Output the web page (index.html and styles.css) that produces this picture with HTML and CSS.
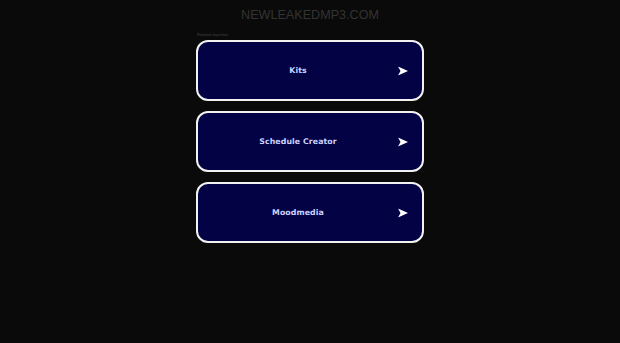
FILE: index.html
```html
<!DOCTYPE html>
<html>
<head>
<meta charset="utf-8">
<link rel="stylesheet" href="styles.css">
</head>
<body>
<div class="page">
  <div class="domain">NEWLEAKEDMP3.COM</div>
  <div class="main">
    <div class="related">Related searches</div>
    <div class="list">
      <a class="item"><span class="label">Kits</span><span class="arrow"><svg width="10" height="9" viewBox="0 0 10 9"><path d="M0 0 L10 4.5 L0 9 L2.5 4.5 Z" fill="#ffffff"/></svg></span></a>
      <a class="item"><span class="label">Schedule Creator</span><span class="arrow"><svg width="10" height="9" viewBox="0 0 10 9"><path d="M0 0 L10 4.5 L0 9 L2.5 4.5 Z" fill="#ffffff"/></svg></span></a>
      <a class="item"><span class="label">Moodmedia</span><span class="arrow"><svg width="10" height="9" viewBox="0 0 10 9"><path d="M0 0 L10 4.5 L0 9 L2.5 4.5 Z" fill="#ffffff"/></svg></span></a>
    </div>
  </div>
</div>
</body>
</html>
```

FILE: styles.css
```css
html, body {
  margin: 0;
  padding: 0;
  background: #0a0a0a;
  height: 100%;
}
.page {
  display: flex;
  flex-direction: column;
  align-items: center;
  font-family: "Liberation Sans", Arial, sans-serif;
}
.domain {
  margin-top: 7px;
  font-size: 12.6px;
  line-height: 17px;
  color: #333333;
}
.main {
  width: 228px;
  margin-top: 8px;
}
.related {
  font-size: 4px;
  line-height: 5px;
  color: #444;
  margin-left: 1px;
  margin-bottom: 3px;
}
.list {
  display: flex;
  flex-direction: column;
  gap: 10px;
}
.item {
  position: relative;
  display: flex;
  align-items: center;
  justify-content: center;
  height: 57px;
  padding-right: 24px;
  background: #020245;
  border: 2px solid #f2f2f2;
  border-radius: 12px;
}
.label {
  font-family: "DejaVu Sans", Verdana, sans-serif;
  font-weight: bold;
  font-size: 7.8px;
  letter-spacing: 0.1px;
  color: #ccd2ff;
}
.arrow {
  position: absolute;
  right: 14px;
  top: 50%;
  transform: translateY(-50%);
  display: flex;
}
```
